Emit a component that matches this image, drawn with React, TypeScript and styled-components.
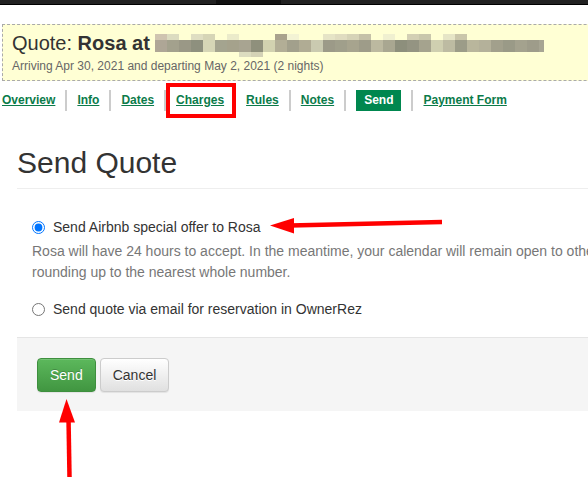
import { Fragment } from "react";
import styled, { createGlobalStyle, css } from "styled-components";

const GlobalStyle = createGlobalStyle`
  html, body {
    margin: 0;
    padding: 0;
    background: #fff;
  }
  body {
    font-family: "Liberation Sans", Arial, sans-serif;
    overflow: hidden;
  }
`;

const Page = styled.div`
  position: relative;
  width: 588px;
  height: 481px;
  overflow: hidden;
`;

const TopBar = styled.div`
  display: flex;
  height: 4px;
  background: #222;
  border-bottom: 1px solid #000;
`;

const TopBarTab = styled.div`
  margin-left: 216px;
  width: 65px;
  background: #111;
`;

const QuoteBox = styled.div`
  margin: 19px 0 0 2px;
  width: 720px;
  padding: 6px 9px;
  border: 1px dashed #aaa;
  background: #ffffd4;
`;

const Title = styled.div`
  height: 24px;
  font-size: 20px;
  line-height: 24px;
  color: #333;
  white-space: nowrap;

  strong {
    font-weight: bold;
  }
`;

const Pixelated = styled.svg`
  display: inline-block;
  vertical-align: -7px;
`;

const Subtitle = styled.div`
  margin-top: 3px;
  font-size: 12px;
  line-height: 16px;
  color: #666;
  white-space: nowrap;
`;

const Nav = styled.nav`
  display: flex;
  align-items: center;
  height: 21px;
  margin: 9px 0 0 2px;
  font-size: 12px;
  font-weight: bold;
  line-height: 21px;
  white-space: nowrap;
`;

const NavLink = styled.a<{ $active?: boolean }>`
  display: block;
  color: #0b7b4a;
  text-decoration: underline;
  cursor: pointer;

  ${(p) =>
    p.$active &&
    css`
      padding: 0 8px;
      background: #00874f;
      color: #fff;
      text-decoration: none;
    `}
`;

const Separator = styled.span`
  width: 2px;
  height: 21px;
  margin: 0 10px;
  background: #ccc;
`;

const Highlighted = styled.span`
  position: relative;
  display: flex;
`;

const HighlightBox = styled.span`
  position: absolute;
  top: -7px;
  bottom: -7px;
  left: -10px;
  right: -12px;
  border: 4px solid #f00;
  pointer-events: none;
`;

const Content = styled.div`
  margin-left: 17px;
  width: 820px;
`;

const PageHeader = styled.h1`
  margin: 35px 0 0;
  padding-bottom: 9px;
  border-bottom: 1px solid #eee;
  font-size: 30px;
  line-height: 33px;
  font-weight: normal;
  color: #333;
`;

const RadioGroup = styled.div`
  margin-top: 28px;
  padding-left: 15px;
`;

const RadioRow = styled.label<{ $spaced?: boolean }>`
  display: flex;
  align-items: center;
  height: 20px;
  margin-top: ${(p) => (p.$spaced ? "16px" : "0")};
  font-size: 14px;
  line-height: 20px;
  color: #333;
  white-space: nowrap;

  input {
    width: 13px;
    height: 13px;
    margin: 0 8px 0 0;
  }
`;

const Help = styled.p`
  margin: 4px 0 0;
  font-size: 14px;
  line-height: 21px;
  color: #777;
  white-space: nowrap;
`;

const FormActions = styled.div`
  display: flex;
  gap: 4px;
  margin-top: 18px;
  padding: 20px 20px 19px;
  border-top: 1px solid #e5e5e5;
  background: #f5f5f5;
`;

const Button = styled.button<{ $primary?: boolean }>`
  padding: 6px 12px;
  font-family: inherit;
  font-size: 14px;
  line-height: 20px;
  border: 1px solid;
  border-radius: 4px;
  cursor: pointer;
  box-shadow: inset 0 1px 0 rgba(255, 255, 255, 0.15), 0 1px 1px rgba(0, 0, 0, 0.075);

  ${(p) =>
    p.$primary
      ? css`
          color: #fff;
          background-image: linear-gradient(to bottom, #5cb85c 0%, #419641 100%);
          border-color: #3e8f3e;
          text-shadow: 0 -1px 0 rgba(0, 0, 0, 0.2);
        `
      : css`
          color: #333;
          background-image: linear-gradient(to bottom, #fff 0%, #e0e0e0 100%);
          border-color: #ccc;
          text-shadow: 0 1px 0 #fff;
        `}
`;

const Annotations = styled.svg`
  position: absolute;
  top: 0;
  left: 0;
  pointer-events: none;
`;

// the redacted property name, drawn as a mosaic
const MAIN_ROW = [
  "#aea696", "#a3a18d", "#9a9886", "#8e907e", "#d6d6b6", "#a4a48f", "#a5a28c",
  "#a8a491", "#8f907c", "#d2d2b0", "#b2ae96", "#a2a08c", "#b0ac94", "#cacab0",
  "#9c9a88", "#a09f8b", "#a7a48e", "#9e9c89", "#bcb9a0", "#a9a791", "#8d8f7c",
  "#949482", "#a5a38e", "#cfcfb0", "#bdbba2", "#9c9c88", "#b9b69c", "#b4b19a",
  "#a2a08c", "#9a9a87", "#a4a28e", "#9e9c8a", "#a7a593",
];

const TOP_ROW: Record<number, string> = {
  0: "#cfc4b0", 1: "#dcdcc0", 3: "#dfdec2", 4: "#d6d5b6", 6: "#ebebca",
  10: "#a9a28d", 11: "#f3f3d4", 14: "#e6e4c6", 15: "#e0dcc0", 16: "#d6d3b7",
  17: "#c5c1a8", 19: "#f0f0d0", 21: "#d3cfb4", 22: "#c9c7ac", 24: "#e6e5c6",
  25: "#cac6aa",
};

const BOTTOM_ROW: Record<number, string> = { 7: "#dcdcc0", 8: "#d4d2b6" };

const Mosaic = () => (
  <Pixelated width={389} height={23} viewBox="0 0 389 23">
    {MAIN_ROW.map((c, i) => (
      <rect key={`m${i}`} x={i * 12} y={6} width={12} height={12} fill={c} />
    ))}
    {Object.entries(TOP_ROW).map(([i, c]) => (
      <rect key={`t${i}`} x={Number(i) * 12} y={0} width={12} height={6} fill={c} />
    ))}
    {Object.entries(BOTTOM_ROW).map(([i, c]) => (
      <rect key={`b${i}`} x={Number(i) * 12} y={18} width={12} height={5} fill={c} />
    ))}
  </Pixelated>
);

const tabs = ["Overview", "Info", "Dates", "Charges", "Rules", "Notes", "Send", "Payment Form"];

export default function App() {
  return (
    <>
      <GlobalStyle />
      <Page>
        <TopBar>
          <TopBarTab />
        </TopBar>

        <QuoteBox>
          <Title>
            Quote: <strong>Rosa at</strong> <Mosaic />
          </Title>
          <Subtitle>Arriving Apr 30, 2021 and departing May 2, 2021 (2 nights)</Subtitle>
        </QuoteBox>

        <Nav>
          {tabs.map((t, i) => (
            <Fragment key={t}>
              {i > 0 && <Separator />}
              {t === "Charges" ? (
                <Highlighted>
                  <NavLink>{t}</NavLink>
                  <HighlightBox />
                </Highlighted>
              ) : (
                <NavLink $active={t === "Send"}>{t}</NavLink>
              )}
            </Fragment>
          ))}
        </Nav>

        <Content>
          <PageHeader>Send Quote</PageHeader>

          <RadioGroup>
            <RadioRow>
              <input type="radio" name="method" defaultChecked />
              Send Airbnb special offer to Rosa
            </RadioRow>
            <Help>
              Rosa will have 24 hours to accept. In the meantime, your calendar will remain open to other
              guests, and all prices will be converted by
              <br />
              rounding up to the nearest whole number.
            </Help>
            <RadioRow $spaced>
              <input type="radio" name="method" />
              Send quote via email for reservation in OwnerRez
            </RadioRow>
          </RadioGroup>

          <FormActions>
            <Button $primary>Send</Button>
            <Button>Cancel</Button>
          </FormActions>
        </Content>

        <Annotations width={588} height={481} viewBox="0 0 588 481">
          <line x1={290} y1={225.5} x2={442} y2={222} stroke="#f00" strokeWidth={4.5} />
          <polygon points="270,225.5 294,218 294,233.5" fill="#f00" />
          <line x1={68.5} y1={418} x2={69.5} y2={477} stroke="#f00" strokeWidth={4.5} />
          <polygon points="66.5,399 59,422.5 75,422.5" fill="#f00" />
        </Annotations>
      </Page>
    </>
  );
}
